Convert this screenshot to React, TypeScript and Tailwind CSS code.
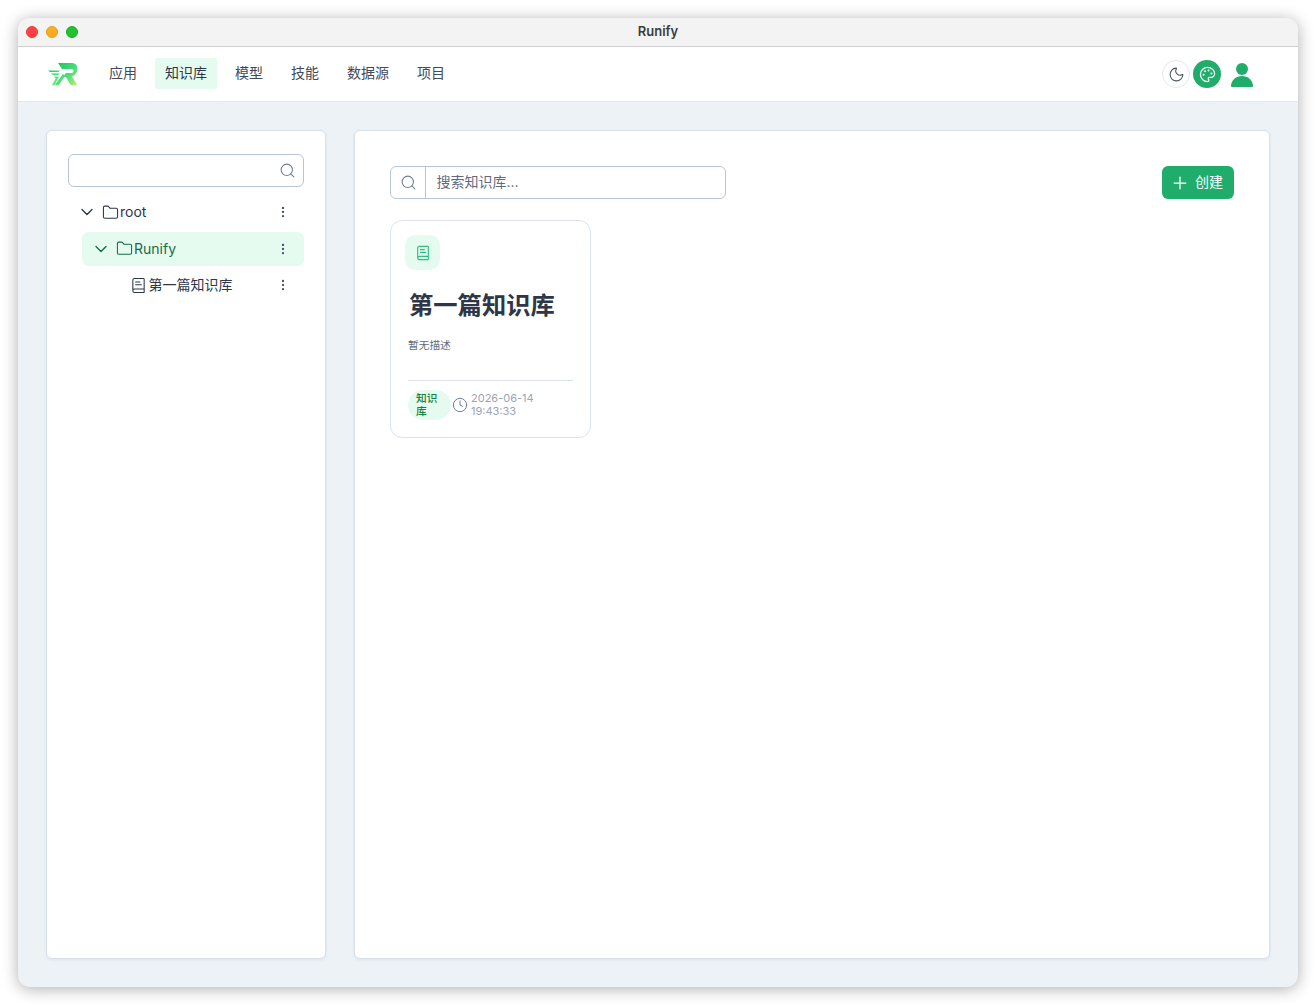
import { BookText, ChevronDown, Clock, EllipsisVertical, Folder, Moon, Palette, Plus, Search } from "lucide-react";

const navItems = ["应用", "知识库", "模型", "技能", "数据源", "项目"];

function Logo() {
  return (
    <svg width="32" height="26" viewBox="0 0 32 26" className="shrink-0">
      <defs>
        <linearGradient id="logo-g" x1="0" y1="0" x2="1" y2="1">
          <stop offset="0" stopColor="#22c55e" />
          <stop offset="0.55" stopColor="#4ade80" />
          <stop offset="1" stopColor="#bef264" />
        </linearGradient>
      </defs>
      <path
        d="M11 2h13c4.500 0 7 2.500 6.500 6.500C30 12 28 14.500 25 15.500L30 24h-6.500L19 16h-3l3-4h5c1.500 0 2.300-.6 2.500-1.800C26.700 8.700 26 8 24.500 8H15z"
        fill="url(#logo-g)"
      />
      <path d="M1 9.500h12l-1.500 1.500H3zM4 12.500h9l-1.500 1.500H6zM7 15.500h5L8 24H5l4-7H8z" fill="url(#logo-g)" />
      <path d="M16 13l2 2-6 9H8z" fill="url(#logo-g)" />
    </svg>
  );
}

function TreeRow({ label, depth, active, file }: { label: string; depth: number; active?: boolean; file?: boolean }) {
  return (
    <div
      className={`flex h-[34px] items-center rounded-md pr-[14px] ${active ? "bg-[#e6fbf0] text-[#166c47]" : "text-[#2d3748]"}`}
      style={{ marginLeft: depth }}
    >
      <div className="flex w-[38px] shrink-0 justify-center">{!file && <ChevronDown size={20} strokeWidth={1.6} />}</div>
      {file ? (
        <div className="ml-[10px] flex items-center gap-[1.500px]">
          <BookText size={17} strokeWidth={1.5} />
          <span className="pb-[1px]">{label}</span>
        </div>
      ) : (
        <div className="-ml-[4px] flex items-center gap-[1px]">
          <Folder size={17} strokeWidth={1.5} />
          <span>{label}</span>
        </div>
      )}
      <EllipsisVertical size={14} strokeWidth={2} className="ml-auto text-[#4a5568]" />
    </div>
  );
}

export default function App() {
  return (
    <div className="h-[1005px] bg-white p-[18px] font-['Inter','Noto_Sans_CJK_SC',sans-serif] text-sm text-[#2d3748]">
      <div className="flex h-[969px] flex-col overflow-hidden rounded-[12px] bg-[#edf2f7] shadow-[0_2px_16px_rgba(0,0,0,0.32)]">
        <div className="relative flex h-[29px] shrink-0 items-center justify-center border-b border-[#d0d0d0] bg-[#f3f3f3]">
          <div className="absolute left-[8px] flex gap-[8px]">
            <span className="h-[12px] w-[12px] rounded-full border border-[#e0443e] bg-[#ff3f3f]" />
            <span className="h-[12px] w-[12px] rounded-full border border-[#dea123] bg-[#fdac22]" />
            <span className="h-[12px] w-[12px] rounded-full border border-[#1aab29] bg-[#22c12f]" />
          </div>
          <span className="pb-[1px] text-[13px] font-semibold text-[#3c3c3c]">Runify</span>
        </div>

        <header className="flex h-[55px] shrink-0 items-center border-b border-[#e2e8f0] bg-white pr-[45px] pl-[29px]">
          <Logo />
          <nav className="mb-[2px] ml-[20px] flex items-center gap-[8px]">
            {navItems.map((item) => (
              <a
                key={item}
                className={`flex h-[31px] items-center rounded-[2px] px-[10px] ${item === "知识库" ? "bg-[#e6fbf0] text-[#2d3748]" : "text-[#3f4a5a]"}`}
              >
                {item}
              </a>
            ))}
          </nav>
          <div className="ml-auto flex items-center">
            <button className="flex h-[28px] w-[28px] items-center justify-center rounded-full border border-[#e2e8f0] text-[#4a5568]">
              <Moon size={17} strokeWidth={1.5} />
            </button>
            <button className="ml-[3px] flex h-[28px] w-[28px] items-center justify-center rounded-full bg-[#20ad6c] text-white">
              <Palette size={17} strokeWidth={1.8} />
            </button>
            <svg width="22" height="24" viewBox="0 0 22 24" className="mt-[2px] ml-[10px]" fill="#20ad6c">
              <circle cx="11" cy="6" r="6" />
              <path d="M1 24c-.6 0-1-.5-1-1C.300 17 5 13 11 13s10.700 4 11 10c0 .5-.4 1-1 1z" />
            </svg>
          </div>
        </header>

        <div className="flex min-h-0 flex-1 gap-[28px] p-[28px]">
          <aside className="w-[280px] shrink-0 rounded-[6px] border border-[#d8e0ec] bg-white px-[21px] pt-[23px] shadow-[0_1px_3px_rgba(45,55,72,0.08)]">
            <div className="flex h-[33px] items-center justify-end rounded-md border border-[#b9c5d6] pr-[7px] pb-[1px] text-[#718096]">
              <Search size={17} strokeWidth={1.5} />
            </div>
            <div className="mt-[8px] flex flex-col gap-[2.500px]">
              <TreeRow label="root" depth={0} />
              <TreeRow label="Runify" depth={14} active />
              <TreeRow label="第一篇知识库" depth={14} file />
            </div>
          </aside>

          <main className="min-w-0 flex-1 rounded-[6px] border border-[#d8e0ec] bg-white p-[35px] shadow-[0_1px_3px_rgba(45,55,72,0.08)]">
            <div className="flex items-center justify-between">
              <div className="flex h-[33px] w-[336px] items-center rounded-md border border-[#b9c5d6]">
                <div className="flex h-full w-[35px] items-center justify-center border-r border-[#b9c5d6] text-[#718096]">
                  <Search size={17} strokeWidth={1.5} />
                </div>
                <span className="pb-[2px] pl-[10.500px] text-[#5f6b7d]">搜索知识库...</span>
              </div>
              <button className="flex h-[33px] w-[72px] items-center justify-center gap-[5px] rounded-md bg-[#20ad6c] pr-[3px] text-white">
                <Plus size={20} strokeWidth={1.5} />
                <span className="pb-[2px]">创建</span>
              </button>
            </div>

            <div className="mt-[21px] flex h-[218px] w-[201px] flex-col rounded-[12px] border border-[#dde3ee] bg-white px-[17px] pt-[14px]">
              <div className="-ml-[3px] flex h-[35px] w-[35px] items-center justify-center rounded-[10px] bg-[#e6fbf0] text-[#2fbf7f]">
                <BookText size={16} strokeWidth={1.7} />
              </div>
              <h2 className="mt-[17px] pl-[1px] text-[24.300px] leading-[36px] font-bold whitespace-nowrap text-[#2d3748]">第一篇知识库</h2>
              <p className="mt-[15px] text-[10.700px] leading-[16px] text-[#5f6b7d]">暂无描述</p>
              <div className="mt-[26px] flex border-t border-[#dde3ee] pt-[9px]">
                <span className="h-[30px] w-[43px] shrink-0 rounded-[15px] bg-[#e6fbf0] py-[2px] pr-[6px] pl-[8px] text-[10.700px] leading-[13px] font-medium text-[#15803d]">
                  知识库
                </span>
                <div className="ml-[2px] flex items-center gap-[3px] text-[#9aa5b5]">
                  <Clock size={16} strokeWidth={1.5} className="-ml-[1px] shrink-0 text-[#718096]" />
                  <span className="w-[80px] text-[11px] leading-[13px]">2026-06-14 19:43:33</span>
                </div>
              </div>
            </div>
          </main>
        </div>
      </div>
    </div>
  );
}
